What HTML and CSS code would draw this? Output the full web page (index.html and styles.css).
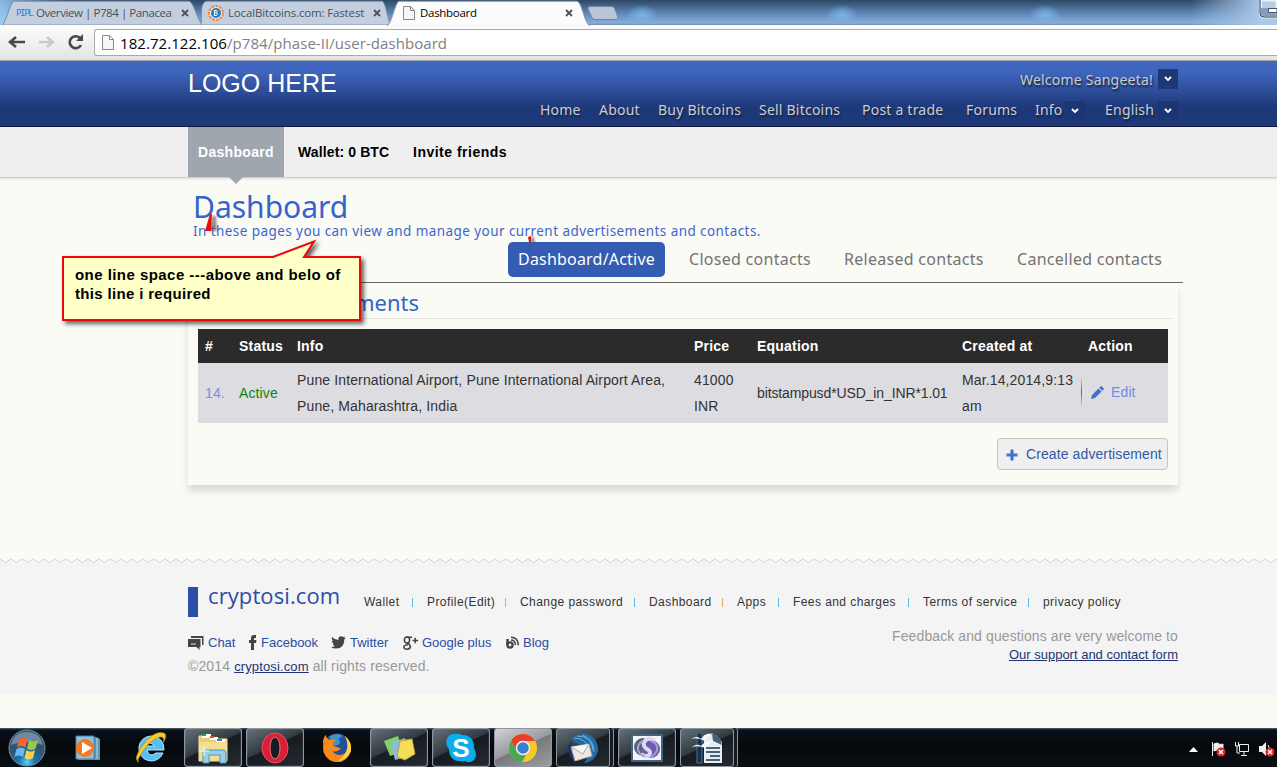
FILE: index.html
```html
<!DOCTYPE html>
<html lang="en">
<head>
<meta charset="utf-8">
<title>Dashboard</title>
<link rel="stylesheet" href="styles.css">
</head>
<body>
<div class="browser">
  <div class="tabs">
    <div class="tab tab-one">
      <svg class="tab-shape" width="202" height="25" viewBox="0 0 202 30" preserveAspectRatio="none"><path d="M0 30C4 28 8 3 12 1.500H187C192 2 196 28 201 30Z" fill="#c3cfdf" stroke="#7d8ca2"/></svg>
      <span class="pipl">PIPL</span><span class="tab-title t-one">Overview | P784 | Panacea</span>
      <svg class="close" width="8" height="8" viewBox="0 0 8 8"><path d="M1 1l6 6M7 1L1 7"/></svg>
    </div>
    <div class="tab tab-two">
      <svg class="tab-shape" width="192" height="25" viewBox="0 0 192 30" preserveAspectRatio="none"><path d="M0 30C4 28 -2 5 6 1.500H182C186 2 188 28 191 30Z" fill="#c3cfdf" stroke="#7d8ca2"/></svg>
      <svg width="16" height="16" viewBox="0 0 16 16"><circle cx="8" cy="8" r="7" fill="#e9e5e0" stroke="#ed8a4a" stroke-width="2" stroke-dasharray="3 1"/><circle cx="8" cy="8" r="5" fill="#2780c5"/><path d="M6.500 5v6M6.500 5.500h2.200q1 1.200 0 2.300H7M8.500 8q1.800 1.200 0 2.500h-2" fill="none" stroke="#fff"/></svg>
      <span class="tab-title t-two">LocalBitcoins.com: Fastest</span>
      <svg class="close" width="8" height="8" viewBox="0 0 8 8"><path d="M1 1l6 6M7 1L1 7"/></svg>
    </div>
    <div class="tab tab-active">
      <svg class="tab-shape" width="204" height="26" viewBox="0 0 204 31" preserveAspectRatio="none"><path d="M0 31C5 28 8 3 12 1.500H190C195 2 197 28 203 31Z" fill="#fcfcfc" stroke="#8b98aa"/><path d="M1 30.500H202" stroke="#fbfbfb"/></svg>
      <svg width="12" height="16" viewBox="0 0 12 16"><path d="M.5 1.500h7l4 4v9H.5zM7.500 1.500v4h4" fill="#f7f7f7" stroke="#888"/></svg>
      <span class="tab-title t-active">Dashboard</span>
      <svg class="close" width="8" height="8" viewBox="0 0 8 8"><path d="M1 1l6 6M7 1L1 7"/></svg>
    </div>
    <svg class="new-tab" width="32" height="16" viewBox="0 0 32 16"><path d="M3 1.500h22q2 0 3 3l3 8q0 2-2 2H8q-2 0-3-2L1 4Q.5 1.500 3 1.500Z" fill="#b8c6d7" stroke="#71869e"/></svg>
    <svg class="window-button" width="18" height="19" viewBox="0 0 18 19"><path d="M1.500 0v13q0 4 4 4H18V0z" fill="#b9cce2" stroke="#e8f0f8" stroke-width="3"/><path d="M2 8h16v8H5q-3 0-3-3z" fill="#839ebf"/><path d="M1 0v13q0 4 4 4h13" fill="none" stroke="#26384d"/><path d="M9.500 8.500H18v4H9.500z" fill="#fff" stroke="#4a535e"/></svg>
  </div>
  <div class="toolbar">
    <svg class="nav-icons" width="84" height="22" viewBox="0 0 84 22" fill="none" stroke-width="2.600"><path d="M8 6l-6 5 6 5M2 11h15" stroke="#484848" transform="translate(8)"/><path d="M38 6l6 5-6 5M30 11h14" stroke="#c9c9c9" transform="translate(9)"/><path d="M81 14a6 6 0 1 1-1-7" stroke="#484848"/><path d="M83 3v7h-7z" fill="#484848"/></svg>
    <div class="address">
      <svg width="12" height="16" viewBox="0 0 12 16"><path d="M.5 .5h7l4 4v10H.5zM7.500 .5v4h4" fill="#f7f7f7" stroke="#888"/></svg>
      <span class="url"><b>182.72.122.106</b>/p784/phase-II/user-dashboard</span>
    </div>
  </div>
</div>

<header class="site-header">
  <div class="column header-grid">
    <div class="logo">LOGO HERE</div>
    <div class="welcome"><span>Welcome Sangeeta!</span><i class="drop"><svg width="8" height="6" viewBox="0 0 8 6"><path d="M1 1l3 3 3-3"/></svg></i></div>
    <nav class="main-nav">
      <a>Home</a><a>About</a><a>Buy Bitcoins</a><a>Sell Bitcoins</a><a>Post a trade</a><a>Forums</a><a>Info</a><i class="drop faint"><svg width="8" height="6" viewBox="0 0 8 6"><path d="M1 1l3 3 3-3"/></svg></i><a>English</a><i class="drop faint"><svg width="8" height="6" viewBox="0 0 8 6"><path d="M1 1l3 3 3-3"/></svg></i>
    </nav>
  </div>
</header>

<div class="subnav">
  <div class="column subnav-row"><a class="current">Dashboard</a><a class="wallet">Wallet: 0 BTC</a><a class="invite">Invite friends</a></div>
</div>

<main class="column content">
  <h1>Dashboard</h1>
  <p class="intro">In these pages you can view and manage your current advertisements and contacts.</p>
  <div class="filters"><a class="on">Dashboard/Active</a><a>Closed contacts</a><a>Released contacts</a><a>Cancelled contacts</a></div>
  <section class="panel">
    <h2><span>Advertisements</span></h2>
    <table class="ads">
      <colgroup><col class="c-num"><col class="c-status"><col class="c-info"><col class="c-price"><col class="c-eq"><col class="c-date"><col class="c-action"></colgroup>
      <tr><th>#</th><th>Status</th><th>Info</th><th>Price</th><th>Equation</th><th>Created at</th><th>Action</th></tr>
      <tr>
        <td class="num">14.</td><td class="active-state">Active</td>
        <td>Pune International Airport, Pune International Airport Area,<br>Pune, Maharashtra, India</td>
        <td>41000<br>INR</td><td class="equation">bitstampusd*USD_in_INR*1.01</td><td>Mar.14,2014,9:13<br>am</td>
        <td class="action"><div class="edit"><svg width="13" height="13" viewBox="0 0 13 13" fill="#4470cb"><path d="M0 13l1-4 6.500-6.500 3 3L4 12zM8.300 1.700L10 0q1 0 3 3l-1.700 1.700z"/></svg><span>Edit</span></div></td>
      </tr>
    </table>
    <div class="create"><svg width="12" height="12" viewBox="0 0 12 12"><path d="M6 .5v11M.5 6h11" stroke="#4470cb" stroke-width="3"/></svg><span>Create advertisement</span></div>
  </section>
</main>

<footer>
  <svg class="zigzag" width="1277" height="6"><defs><pattern id="zig" width="11" height="6" patternUnits="userSpaceOnUse"><path d="M0 0h11v1L5.500 4.500 0 1z" fill="#fafbf5"/><path d="M0 1l5.500 3.500L11 1" fill="none" stroke="#d4d4d4"/></pattern></defs><rect width="1277" height="6" fill="url(#zig)"/></svg>
  <div class="column footer-body">
    <div class="footer-top"><i class="brand-bar"></i><span class="brand">cryptosi.com</span>
      <nav class="footer-nav"><a>Wallet</a><a>Profile(Edit)</a><a>Change password</a><a>Dashboard</a><a>Apps</a><a>Fees and charges</a><a>Terms of service</a><a>privacy policy</a></nav>
    </div>
    <div class="footer-bottom">
      <div>
        <div class="social">
          <a><svg width="16" height="14" viewBox="0 0 16 14" fill="#444"><path d="M3 0h12.500v9H14V2H3zM0 3h12.500v8h-1v3l-3-3H0z"/><path d="M3 8h5" stroke="#ddd"/></svg>Chat</a>
          <a><svg width="8" height="15" viewBox="0 0 8 15" fill="#444"><path d="M2 15V8H0V5h2V3q0-3 3-3h2v3H6Q5 3 5 4v1h2.500L7 8H5v7z"/></svg>Facebook</a>
          <a><svg width="15" height="13" viewBox="0 0 15 13" fill="#444"><path d="M0 11q3 0 4-1.200Q2 9.400 1.800 8h1Q1 7 .8 4.800l1.200.4Q0 3.500 1 1q3 3 6.400 3Q7 .5 10 .3q1.200 0 2 .8l2-.7-1 1.700 1.800-.4-1.500 1.800Q13.500 12.500 5 12.500q-3 0-5-1.500z"/></svg>Twitter</a>
          <a><svg width="15" height="14" viewBox="0 0 15 14" fill="none" stroke="#444" stroke-width="1.500"><ellipse cx="4" cy="4" rx="2.600" ry="3"/><path d="M3 1.200h6M4 7q3 1 3.500 3.500Q7 13.200 4 13.200T.8 11Q1 9 5 8.700M9.500 4.500H15M12.200 1.700v5.600"/></svg>Google plus</a>
          <a><svg width="13" height="13" viewBox="0 0 13 13" fill="none" stroke="#444"><path d="M1.500 3v6" stroke-width="2.500"/><circle cx="4" cy="9" r="2.600" stroke-width="2.300"/><path d="M5 4q4 0 4.500 5M5 1.200q7 0 7.300 8" stroke-width="1.500"/></svg>Blog</a>
        </div>
        <p class="copy">©2014 <a>cryptosi.com</a> all rights reserved.</p>
      </div>
      <div class="feedback"><span>Feedback and questions are very welcome to</span><a>Our support and contact form</a></div>
    </div>
  </div>
</footer>

<div class="taskbar">
  <div class="task plain start"><svg width="40" height="39" viewBox="0 0 40 39"><defs><radialGradient id="orb" cy=".9"><stop offset="0" stop-color="#54d5fa"/><stop offset=".45" stop-color="#1975b0"/><stop offset="1" stop-color="#325472"/></radialGradient></defs><circle cx="20" cy="20" r="18" fill="url(#orb)" stroke="#7790a2"/><path d="M4 17Q7 4 20 4t16 13q-16-6-32 0z" fill="#a9bdce" opacity=".5"/><path d="M12 11q5-3 8.500 0l-2 8.500q-4-3-8.500 0z" fill="#ef6635"/><path d="M22 12q4 3 9 0l-2.500 8.500q-4 3-8.500 0z" fill="#9cc94a"/><path d="M9.500 21q5-3 8.500 0l-2 8q-4-3-8.500 0z" fill="#68b9ec"/><path d="M19.500 22q4 3 8.500 0l-2 8q-4 3-8.500 0z" fill="#fbd04a"/></svg></div>
  <div class="task plain"><svg width="28" height="28" viewBox="0 0 28 28"><path d="M4 3h18l4 2v21H4z" fill="#5c95b8"/><path d="M2 2h18v23H2z" fill="#8fc3df" stroke="#497c9b"/><path d="M23 4v21" stroke="#b6deef"/><circle cx="11" cy="14" r="9" fill="#f47920"/><path d="M8 8l10 6-10 6z" fill="#fff"/></svg></div>
  <div class="task plain"><svg width="32" height="33" viewBox="0 0 32 33"><path d="M16 5a12.500 12.500 0 1 0 12 17h-7q-7 5-9-3h17Q29 6 16 5zm-5 10q2-6 9 0z" fill="#56c0f2" fill-rule="evenodd" stroke="#b6e8ff"/><path d="M4 31Q-3 29 8 14T29 2q4 2-1 10 2-7-3-6Q16 8 8 20T4 31z" fill="#f9cb2d" stroke="#b77c12" stroke-width=".6"/></svg></div>
  <div class="task framed"><svg width="34" height="32" viewBox="0 0 34 32"><path d="M3 4h10l2 3h16v22H3z" fill="#e6cc72" stroke="#f8e9a6"/><path d="M6 2h9v4H6zM14 5h8v3h-8zM20 7h9v3h-9z" fill="#fff"/><path d="M6 2h4v2H6z" fill="#24a747"/><path d="M14 4h4v2h-4z" fill="#d9532b"/><path d="M21 7h5v2h-5z" fill="#2787d7"/><path d="M3 10h28v18H3z" fill="#f5dd91"/><path d="M7 31V20q1-2 4-2h15q4 0 4 3v10h-6v-8H13v8z" fill="#9bd0e7" stroke="#4796b9"/><path d="M8 14v10M3 19h10" stroke="#e9ffff"/></svg></div>
  <div class="task framed gap-wide"><svg width="30" height="32" viewBox="0 0 30 32"><ellipse cx="15" cy="16" rx="13" ry="15" fill="#d81f35" stroke="#f05264"/><ellipse cx="15" cy="16" rx="5" ry="11" fill="#171c21" stroke="#ee7481"/></svg></div>
  <div class="task plain fox"><svg width="32" height="32" viewBox="0 0 32 32"><circle cx="16" cy="16" r="14" fill="#e96b12"/><circle cx="16" cy="13" r="11.500" fill="#224f9a"/><path d="M9 4q8-4 13 0-7 3-3 5 1 4-5 5-6-3-5-10z" fill="#3f92ce"/><path d="M2 9q1-5 3-6 0 4 4 5 4-1 6 0-5 3-2 6 5 2 7 2-4 5-9 3 7 8 16 0Q31 13 24 5q5 3 6 10 0 10-10 15Q7 31 3 20z" fill="#f58b1b"/><path d="M24 4q7 6 6 15-4 9-13 10 14-10 7-25z" fill="#ffd23f"/></svg></div>
  <div class="task framed"><svg width="34" height="30" viewBox="0 0 34 30"><path d="M2 8l14-5 5 16-13 4z" fill="#85cf63"/><path d="M9 10l14-5 4 18-14 4z" fill="#8abbe8"/><path d="M18 8l12-2 3 15-10 6-8-3z" fill="#f4dd58" stroke="#bda031"/></svg></div>
  <div class="task framed"><svg width="32" height="32" viewBox="0 0 32 32"><path d="M9 2q5-1 8 1 12 0 12 13 4 7 0 12-5 4-9 1Q4 31 4 17-1 11 3 5q2-3 6-3z" fill="#0badea"/></svg><b class="skype">S</b></div>
  <div class="task framed light"><svg width="30" height="30" viewBox="0 0 30 30"><circle cx="15" cy="15" r="14" fill="#f9c928"/><path d="M3 8Q7 1 15 1t12 7H15q-7 0-7 8z" fill="#e53d2e"/><path d="M3 8l7 11q3 4 8 3l-4 7Q1 28 1 15q0-4 2-7z" fill="#4aa84e"/><circle cx="15" cy="15" r="6.500" fill="#3c7ed0" stroke="#e9edf1" stroke-width="1.500"/></svg></div>
  <div class="task framed stacked"><svg width="32" height="32" viewBox="0 0 32 32"><path d="M4 7Q12 0 22 2q10 6 9 17-3 11-14 12 5-7 7-12Q13 14 4 7z" fill="#2569a5"/><path d="M10 4q15 0 16 14M15 3q12 4 12 17M7 6q13 0 16 13" fill="none" stroke="#66b2da"/><path d="M4 8L1 15q0 10 7 15z" fill="#173967"/><path d="M4 15l18-3 3 12-17 5z" fill="#eee8df" stroke="#a4a4a8"/><path d="M4 15l12 7 6-10" fill="#faf7f1" stroke="#aaa"/></svg></div>
  <div class="task framed"><svg width="32" height="28" viewBox="0 0 32 28"><path d="M1 1h30v26H1z" fill="#f3f4f7" stroke="#3f6585" stroke-width="2"/><circle cx="12" cy="13" r="9" fill="#56657c"/><circle cx="20" cy="15" r="9" fill="#7059b2"/><path d="M24 7q-7-5-11 1-1 5 3 7 5 3 2 6-3 3-8-1" fill="none" stroke="#dcd9ef" stroke-width="4"/><path d="M12 7q-6 3-5 9 2 6 7 6M20 7q7 2 6 9-2 6-7 7" fill="none" stroke="#a89fd4" stroke-width="2"/></svg></div>
  <div class="task framed stacked"><svg width="32" height="32" viewBox="0 0 32 32"><path d="M6 1h5v30H6z" fill="#16304e" stroke="#46729a"/><path d="M13 3h12l6 7v21H13z" fill="#e7edf1"/><path d="M21 2q8 1 10 11l-9-4z" fill="#446377"/><path d="M15 16h14M15 20h14M19 24h10M15 28h14" stroke="#47627b" stroke-width="2"/><path d="M0 7q6-4 10 0 5-7 13-5-6 1-9 7-8-4-14-2zM1 15q5-4 9-1 5-6 13-5-6 2-8 7-8-3-14-1z" fill="#f7f8f8"/></svg></div>
  <div class="tray">
    <svg width="9" height="5" viewBox="0 0 9 5"><path d="M0 5l4.500-5L9 5z" fill="#fff"/></svg>
    <svg width="16" height="16" viewBox="0 0 16 16"><path d="M2.500 1v14M4 3q3-2 5 0 2 1 4 0v7q-2 1-4 0-2-2-5 0z" fill="#eee" stroke="#eee"/><circle cx="11" cy="11" r="4.500" fill="#dd2525"/><path d="M9 9l4 4m0-4l-4 4" stroke="#fff" stroke-width="1.500"/></svg>
    <svg width="16" height="16" viewBox="0 0 16 16" fill="none" stroke="#eee"><path d="M5.500 3.500h9v7h-9zM10 11v3M7 14.500h6M1.500 1v4h3V1M3 5v7h3"/></svg>
    <svg width="17" height="16" viewBox="0 0 17 16"><path d="M1 5h3l4-4v14l-4-4H1z" fill="#eee"/><path d="M10 4q3 3 0 8" fill="none" stroke="#eee"/><circle cx="12" cy="11" r="4.500" fill="#dd2525"/><path d="M10 9l4 4m0-4l-4 4" stroke="#fff" stroke-width="1.500"/></svg>
  </div>
</div>

<svg class="pin pin-one" width="16" height="22" viewBox="0 0 16 22"><path d="M8 3h4l1 15H6z" class="pin-shadow"/><path d="M6 1h2l-1 17H1z" fill="#f00b0b"/></svg>
<svg class="pin pin-two" width="10" height="9" viewBox="0 0 10 9"><path d="M4 2h3l1 6H4z" class="pin-shadow"/><path d="M1 2l3-1v6H2z" fill="#f00b0b"/></svg>
<aside class="note">
  <svg width="310" height="90" viewBox="0 0 310 90"><path d="M1 17H211L252 1.500 242 17H298V80H1Z" fill="#ffffc8" stroke="#e90b0b" stroke-width="2"/></svg>
  <p><span class="n-one">one line space ---above and belo of</span><br><span class="n-two">this line i required</span></p>
</aside>
</body>
</html>
```
FILE: styles.css
```css
* { box-sizing: border-box; }
body { margin: 0; width: 1277px; height: 767px; overflow: hidden; position: relative; background: #fafbf5; font-family: "Liberation Sans", Arial, sans-serif; font-size: 14px; color: #333; display: flex; flex-direction: column; }
h1, h2, p { margin: 0; font-weight: normal; }
a, span { white-space: nowrap; }
svg { display: block; flex: none; }
.column { width: 990px; margin-left: 188px; }

/* Browser window */
.browser { height: 61px; flex: none; border-bottom: 1px solid #a3a3a0; font-family: "Open Sans", sans-serif; }
.tabs { height: 25px; display: flex; position: relative; padding-left: 2px; background: radial-gradient(ellipse 16px 10px at 642px 15px, #76b5e8, transparent), radial-gradient(ellipse 16px 10px at 842px 15px, #76b5e8, transparent), radial-gradient(ellipse 16px 10px at 1045px 15px, #76b5e8, transparent), linear-gradient(90deg, rgba(160,210,250,.8) 0, transparent 70px, transparent 1190px, #a9c7e6 1260px), linear-gradient(#2d4866 0, #44648a 6px, #658ebe 15px, #88add9 23px, #758eaa 25px); }
.tab { position: relative; height: 25px; display: flex; align-items: center; }
.tab-shape { position: absolute; left: 0; top: 0; }
.tab > :not(.tab-shape) { position: relative; }
.tab-one { width: 198px; padding-left: 14px; }
.tab-two { width: 187px; padding-left: 8px; }
.tab-active { width: 200px; padding-left: 16px; z-index: 1; }
.pipl { font: 9px "DejaVu Sans Mono", monospace; color: #1682e6; width: 20px; letter-spacing: -1.300px; }
.tab-title { font-size: 11.500px; color: #4a5058; overflow: hidden; }
.t-one { width: 138px; letter-spacing: -.43px; margin-right: 7px; }
.t-two { width: 137px; letter-spacing: -.15px; margin: 0 8px 0 4px; }
.t-active { width: 145px; letter-spacing: -.3px; margin-left: 5px; color: #000; }
.close { stroke: #4c5157; stroke-width: 1.800; fill: none; }
.new-tab { margin-top: 5px; }
.window-button { margin-left: auto; }
.toolbar { height: 35px; display: flex; align-items: flex-start; padding-top: 4px; background: linear-gradient(#fcfcfc, #e4e4e4); }
.nav-icons { width: 84px; margin-right: 10px; margin-top: 2px; }
.address { flex: 1; height: 27px; background: #fff; border: 1px solid #aaa; border-right: 0; border-radius: 3px 0 0 3px; display: flex; align-items: center; padding-left: 7px; gap: 6px; }
.url { font-size: 15px; color: #7f7f7f; line-height: 18px; letter-spacing: .06px; }
.url b { font-weight: normal; color: #000; }

/* Site header */
.site-header { height: 66px; flex: none; background: linear-gradient(#4067c1 0, #3e64bb 12px, #1e397a 46px, #1e397a); border-bottom: 1px solid #02072b; font-family: "Noto Sans", "Open Sans", sans-serif; }
.header-grid { display: grid; grid-template-columns: 352px 638px; grid-template-rows: 35px 30px; }
.logo { font: 25px/44px "Liberation Sans", sans-serif; color: #fff; height: 35px; white-space: nowrap; }
.welcome { display: flex; justify-content: flex-end; align-items: center; gap: 5px; height: 36px; }
.welcome, .main-nav { font-size: 14px; letter-spacing: .22px; color: #ccc; text-shadow: 1px 2px 2px #122145; }
.main-nav { grid-column: 2; display: grid; grid-template-columns: 59px 59px 101px 103px 104px 69px 30px 40px 53px 20px; align-items: center; height: 29px; }
.main-nav a { line-height: 20px; margin-top: -1px; }
.drop { width: 20px; height: 20px; display: grid; place-items: center; background: #1e3775; }
.faint { background: #1c3674; }
.drop path { fill: none; stroke: #fff; stroke-width: 1.800; }
.subnav { height: 51px; flex: none; background: #efefef; border-bottom: 1px solid #ccc; box-shadow: 0 1px 2px #ddd; }
.subnav-row { display: flex; height: 50px; line-height: 50px; font-weight: bold; color: #000; }
.current { position: relative; width: 96px; background: #9fa6ae; color: #fff; padding-left: 10px; letter-spacing: .3px; }
.current::after { content: ""; position: absolute; left: 41px; top: 50px; border: 7px solid transparent; border-top-color: #9fa6ae; border-bottom: 0; }
.wallet { width: 115px; margin-left: 14px; letter-spacing: .12px; }
.invite { letter-spacing: .5px; }

/* Dashboard */
.content { height: 380px; flex: none; font-family: "Noto Sans", "Open Sans", sans-serif; }
h1 { font-size: 30px; line-height: 38px; height: 44px; padding: 10px 0 0 5px; color: #3464cc; }
.intro { padding-left: 5px; font-size: 13.500px; letter-spacing: .43px; line-height: 18px; color: #3f65cc; height: 20px; white-space: nowrap; }
.filters { height: 41px; margin-left: 5px; width: 990px; padding-left: 315px; border-bottom: 1px solid #666; display: grid; grid-template-columns: 157px 155px 173px 190px; line-height: 35px; font-size: 16px; letter-spacing: .28px; color: #737373; }
.filters a { padding-left: 24px; }
.filters .on { background: #345cb2; color: #fff; border-radius: 5px; padding-left: 10px; height: 35px; letter-spacing: .2px; }
.panel { height: 202px; padding: 0 10px; box-shadow: 0 6px 7px rgba(0,0,0,.13); font-family: "Liberation Sans", Arial, sans-serif; }
h2 { font: 22px/38px "Noto Sans", "Open Sans", sans-serif; color: #3464cc; height: 36px; border-bottom: 1px solid #e3e3e7; margin: 0 -5px 10px 0; }
h2 span { display: block; width: 221px; text-align: right; }
.ads { border-collapse: collapse; table-layout: fixed; width: 970px; line-height: 26px; }
.c-num { width: 34px; } .c-status { width: 58px; } .c-info { width: 397px; } .c-price { width: 63px; } .c-eq { width: 205px; } .c-date { width: 119px; } .c-action { width: 94px; }
th, td { padding: 0 0 0 7px; text-align: left; white-space: nowrap; }
th { height: 34px; color: #fff; background: #2b2b2b; letter-spacing: .2px; }
td { height: 60px; background: #dddce1; padding-bottom: 0; letter-spacing: .13px; }
td.num { color: #7a8fe0; }
th:nth-child(7) { padding-left: 14px; }
td.active-state { color: #0b850d; }
td.equation { letter-spacing: -.12px; }
td.action { padding: 0 0 2px 7px; }
.edit { height: 30px; display: flex; align-items: center; gap: 7px; padding-left: 9px; color: #718ae0; border-left: 1px solid; border-image: linear-gradient(transparent, #666, transparent) 1; }
.create { width: 171px; height: 32px; margin: 15px 0 0 auto; border: 1px solid #c4c4c4; border-radius: 4px; background: #efefef; color: #345aa5; display: flex; align-items: center; padding-left: 8px; gap: 8px; letter-spacing: .1px; }
.create svg { margin-top: 2px; }

/* Footer */
footer { height: 137px; flex: none; background: #f4f4f4; }
.zigzag { height: 6px; }
.footer-body { padding-top: 23px; }
.footer-top { display: flex; height: 46px; }
.brand-bar { width: 10px; height: 30px; background: #2b4ea6; margin-right: 10px; }
.brand { width: 156px; font: 22px/17px "Open Sans", sans-serif; letter-spacing: .1px; color: #2b4ea6; }
.footer-nav { display: grid; grid-template-columns: 63px 93px 129px 88px 56px 130px 120px 80px; font-size: 12px; letter-spacing: .43px; line-height: 31px; }
.footer-nav a { position: relative; }
.footer-nav a:not(:last-child)::after { content: ""; position: absolute; right: 14px; top: 11px; width: 1px; height: 9px; background: #66b9e5; }
.footer-nav a:nth-child(2)::after, .footer-nav a:nth-child(4)::after { background: #dda765; }
.footer-bottom { display: flex; justify-content: space-between; }
.social { display: grid; grid-template-columns: 61px 82px 72px 103px 50px; height: 19px; font-size: 13px; color: #2b4ea6; }
.social a { display: flex; align-items: center; gap: 4px; }
.copy { font-size: 14px; line-height: 28px; letter-spacing: .13px; color: #999; }
.copy a { font-size: 13px; color: #1c3472; text-decoration: underline; }
.feedback { display: flex; flex-direction: column; align-items: flex-end; color: #999; line-height: 18px; margin-top: -6px; }
.feedback span { letter-spacing: .1px; }
.feedback a { color: #1c3472; text-decoration: underline; font-size: 13px; line-height: 20px; }

/* Desktop taskbar */
.taskbar { height: 39px; margin-top: 33px; flex: none; display: flex; background: linear-gradient(#536579 0, #0a1119 2px, #05080b 20px, #0b1015); }
.task { position: relative; width: 58px; height: 39px; margin-right: 4px; display: grid; place-items: center; }
.start { width: 54px; }
.framed { border: 1px solid #8d969e; border-radius: 3px; background: linear-gradient(155deg, #657078, #333b42 45%, #171c21 48%, #242a30); box-shadow: inset 0 0 1px #ccc; }
.light { background: linear-gradient(155deg, #d1d3d5, #989a9e 48%, #77797d 50%, #9a9c9e); }
.stacked { width: 54px; margin-right: 8px; box-shadow: 3px 0 #161b20, 4px 0 #8c949b; }
.plain:nth-child(2) { width: 60px; }
.skype { position: absolute; color: #fff; font-size: 26px; line-height: 30px; }
.tray { margin: 12px 2px 0 auto; display: flex; align-items: center; gap: 8px; height: 18px; }
.tray svg:first-child { margin-right: 4px; }

/* Annotation */
.note { position: absolute; left: 62px; top: 240px; width: 310px; height: 90px; font-size: 15px; font-weight: bold; line-height: 19px; color: #000; }
.note svg { position: absolute; left: 0; top: 0; filter: drop-shadow(3px 3px 2px rgba(0,0,0,.6)); overflow: visible; }
.note p { position: relative; padding: 25px 0 0 13px; font-weight: bold; }
.n-one { letter-spacing: .45px; }
.n-two { letter-spacing: .33px; }
.pin { position: absolute; }
.pin-one { left: 204px; top: 213px; }
.pin-two { left: 527px; top: 235px; }
.pin-shadow { fill: #555; opacity: .65; filter: blur(1px); }
```
